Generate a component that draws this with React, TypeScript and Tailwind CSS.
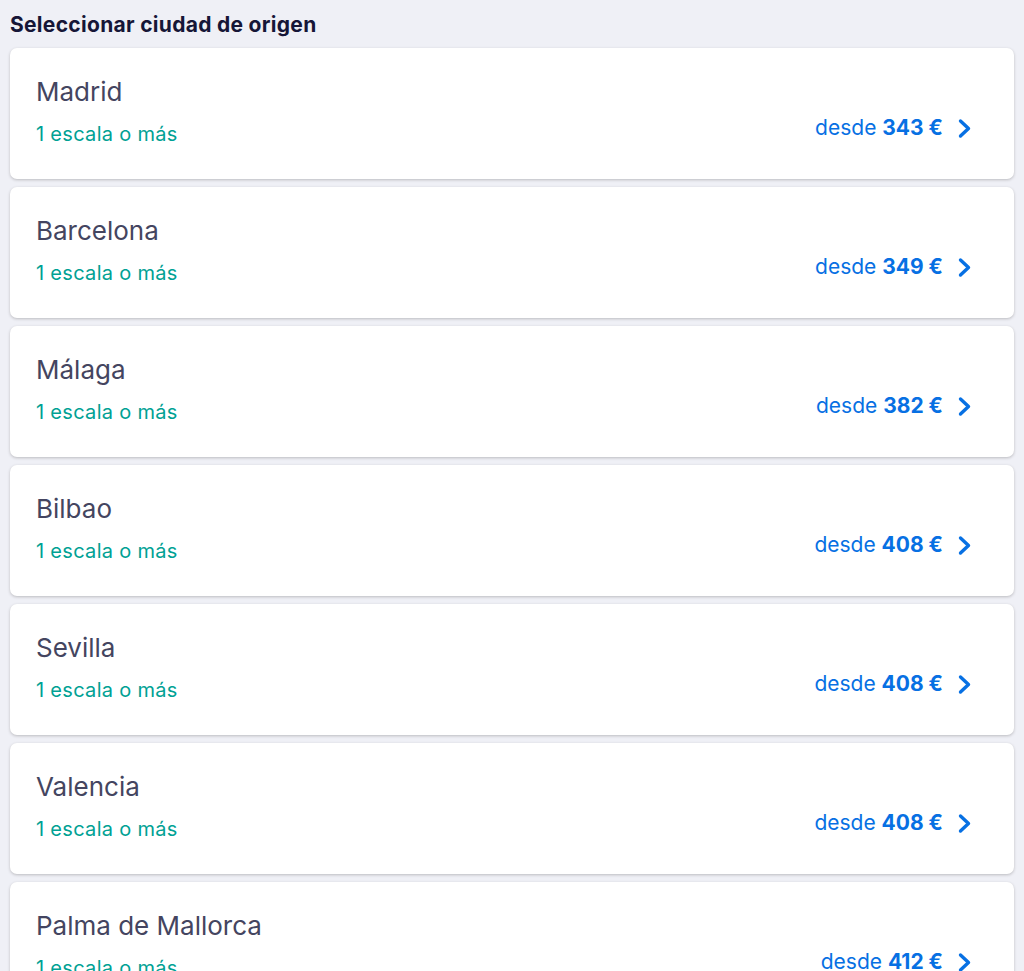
const cities = [
  { name: 'Madrid', price: 343 },
  { name: 'Barcelona', price: 349 },
  { name: 'Málaga', price: 382 },
  { name: 'Bilbao', price: 408 },
  { name: 'Sevilla', price: 408 },
  { name: 'Valencia', price: 408 },
  { name: 'Palma de Mallorca', price: 412 },
];

function Chevron() {
  return (
    <svg width="15" height="21" viewBox="0 0 15 21" fill="none" className="shrink-0">
      <polyline points="3.5,3 11.5,10.5 3.5,18" stroke="#0770e3" strokeWidth="3.4" strokeLinecap="round" strokeLinejoin="round" />
    </svg>
  );
}

export default function App() {
  return (
    <div className="min-h-[971px] bg-[#eff0f6] px-[10px] pt-[11px] pb-4" style={{ fontFamily: 'Inter, "Noto Sans", sans-serif' }}>
      <h2 className="text-[21px] leading-[28px] font-bold text-[#161637] tracking-[0.3px] mb-[9px]">
        Seleccionar ciudad de origen
      </h2>

      <div className="flex flex-col gap-[8px]">
        {cities.map((c) => (
          <div
            key={c.name}
            className="h-[131px] bg-white rounded-[7px] shadow-[0_1px_3px_rgba(37,32,31,0.25)] pl-[26px] pr-[42px] pt-[27px] flex justify-between"
          >
            <div className="flex flex-col">
              <span className="text-[26px] leading-[34px] text-[#444560]">{c.name}</span>
              <span className="text-[20px] leading-[28px] mt-[11px] text-[#00a194] tracking-[0.3px]">1 escala o más</span>
            </div>
            <div className="flex items-center gap-[14px] mt-[39px] self-start">
              <span className="text-[21px] leading-[28px] text-[#0770e3]">
                desde <span className="font-bold">{c.price} €</span>
              </span>
              <Chevron />
            </div>
          </div>
        ))}
      </div>
    </div>
  );
}
